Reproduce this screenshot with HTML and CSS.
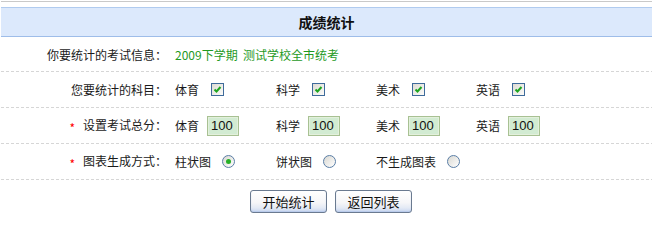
FILE: index.html
```html
<!DOCTYPE html>
<html lang="zh-CN">
<head>
<meta charset="utf-8">
<title>成绩统计</title>
<link rel="stylesheet" href="styles.css">
</head>
<body>
<div class="page">
  <div class="topline"></div>
  <div class="head">成绩统计</div>
  <div class="form">
    <div class="row">
      <div class="label">你要统计的考试信息：</div>
      <div class="value green">2009下学期&nbsp; 测试学校全市统考</div>
    </div>
    <div class="row">
      <div class="label">您要统计的科目：</div>
      <div class="value items">
        <div class="item"><span class="name">体育</span><span class="cb"><svg width="9" height="9" viewBox="0 0 9 9"><path d="M1.5 4.5 L3.5 6.5 L7.5 2" fill="none" stroke="#1fa51f" stroke-width="2"/></svg></span></div>
        <div class="item"><span class="name">科学</span><span class="cb"><svg width="9" height="9" viewBox="0 0 9 9"><path d="M1.5 4.5 L3.5 6.5 L7.5 2" fill="none" stroke="#1fa51f" stroke-width="2"/></svg></span></div>
        <div class="item"><span class="name">美术</span><span class="cb"><svg width="9" height="9" viewBox="0 0 9 9"><path d="M1.5 4.5 L3.5 6.5 L7.5 2" fill="none" stroke="#1fa51f" stroke-width="2"/></svg></span></div>
        <div class="item"><span class="name">英语</span><span class="cb"><svg width="9" height="9" viewBox="0 0 9 9"><path d="M1.5 4.5 L3.5 6.5 L7.5 2" fill="none" stroke="#1fa51f" stroke-width="2"/></svg></span></div>
      </div>
    </div>
    <div class="row">
      <div class="label"><span class="req">*</span>设置考试总分：</div>
      <div class="value items">
        <div class="item"><span class="name">体育</span><input class="score" type="text" value="100"></div>
        <div class="item"><span class="name">科学</span><input class="score" type="text" value="100"></div>
        <div class="item"><span class="name">美术</span><input class="score" type="text" value="100"></div>
        <div class="item"><span class="name">英语</span><input class="score" type="text" value="100"></div>
      </div>
    </div>
    <div class="row">
      <div class="label"><span class="req">*</span>图表生成方式：</div>
      <div class="value items">
        <div class="item"><span class="name">柱状图</span><span class="rb on"></span></div>
        <div class="item"><span class="name">饼状图</span><span class="rb"></span></div>
        <div class="item"><span class="name">不生成图表</span><span class="rb"></span></div>
      </div>
    </div>
  </div>
  <div class="actions">
    <button class="btn" type="button">开始统计</button>
    <button class="btn" type="button">返回列表</button>
  </div>
</div>
</body>
</html>
```
FILE: styles.css
```css
html, body {
  margin: 0;
  padding: 0;
  background: #fff;
}
body {
  font-family: "Noto Sans CJK SC", "Noto Sans", sans-serif;
  font-size: 12px;
  color: #1a1a1a;
}
.page {
  width: 651px;
  margin: 1px 0 0 1px;
}
.topline {
  height: 1px;
  background: #c9c9c9;
  margin-bottom: 5px;
}
.head {
  height: 28px;
  line-height: 28px;
  border-top: 1px solid #b0cbef;
  border-bottom: 1px solid #9ebde9;
  background: #dce9fc;
  text-align: center;
  font-size: 14px;
  font-weight: bold;
  color: #111;
}
.row {
  display: grid;
  grid-template-columns: 166px 1fr;
  align-items: center;
  height: 36px;
  box-sizing: border-box;
  padding-bottom: 1px;
  background-image: repeating-linear-gradient(to right, #d6d6d6 0 3px, transparent 3px 5px);
  background-repeat: no-repeat;
  background-size: 100% 1px;
  background-position: left bottom;
}
.row:first-child {
  height: 35px;
}
.label {
  text-align: right;
  white-space: nowrap;
}
.req {
  color: #f00;
  margin-right: 8px;
  vertical-align: -3px;
  font-size: 12px;
}
.value {
  padding-left: 8px;
}
.green {
  color: #1f9a1f;
}
.items {
  display: flex;
  align-items: center;
}
.item {
  width: 100px;
  display: flex;
  align-items: center;
}
.item:first-child {
  width: 101px;
}
.name {
  white-space: nowrap;
}
.cb {
  width: 11px;
  height: 11px;
  border: 1px solid #3f6b9b;
  background: linear-gradient(135deg, #dedcd4, #fbfbf9);
  margin-left: 12px;
  display: flex;
  align-items: center;
  justify-content: center;
}
.cb svg {
  display: block;
}
.rb {
  width: 11px;
  height: 11px;
  border: 1px solid #5a7ea6;
  border-radius: 50%;
  background: linear-gradient(135deg, #d9d8d2, #ffffff);
  margin-left: 11px;
  display: flex;
  align-items: center;
  justify-content: center;
}
.rb.on::after {
  content: "";
  width: 5px;
  height: 5px;
  border-radius: 50%;
  background: #27b027;
}
.score {
  width: 32px;
  height: 20px;
  box-sizing: border-box;
  margin: 0 0 0 8px;
  padding: 0 0 0 3px;
  border: 1px solid #a8c193;
  box-shadow: inset 0 0 0 1px #e3f0dc;
  background: #d2ebd2;
  font-family: "Liberation Sans", sans-serif;
  font-size: 13px;
  color: #111;
  outline: none;
}
.actions {
  display: flex;
  justify-content: center;
  gap: 8px;
  padding: 10px 0 0 9px;
}
.btn {
  width: 77px;
  height: 23px;
  margin: 0;
  padding: 0;
  border: 1px solid #6a7a90;
  border-radius: 3px;
  background: linear-gradient(#ffffff, #f6f6f8 55%, #e4eaf5 80%, #c8d6f0);
  box-shadow: inset 0 -1px 1px #b8caea;
  font-family: "Noto Sans CJK SC", sans-serif;
  font-size: 13px;
  color: #111;
}
```
